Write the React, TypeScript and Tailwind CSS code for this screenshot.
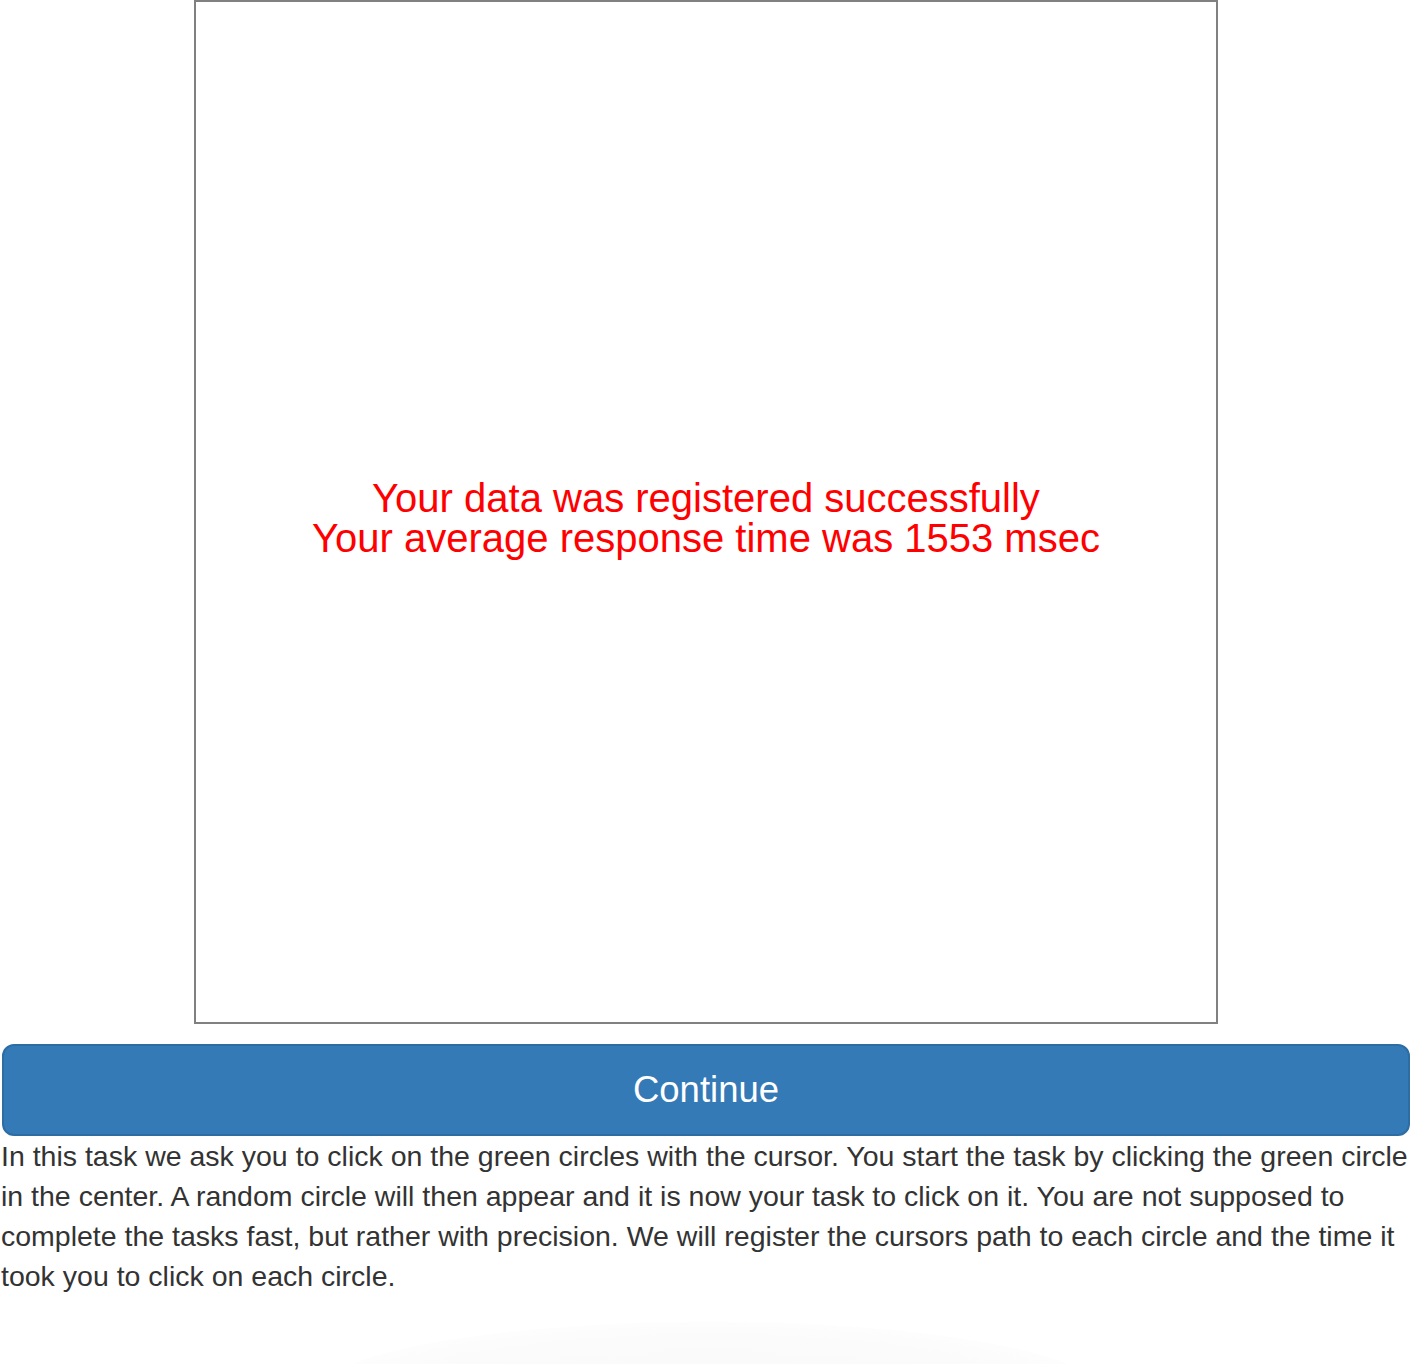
export default function App() {
  return (
    <div className="relative min-h-[1364px] bg-white font-['Liberation_Sans',Arial,sans-serif] overflow-hidden">
      <div className="mx-auto flex h-[1024px] w-[1024px] flex-col items-center justify-center border-2 border-[#808080] pt-[12px]">
        <p className="text-center text-[40px] leading-[40px] text-[#ff0000]">
          Your data was registered successfully
          <br />
          Your average response time was 1553 msec
        </p>
      </div>
      <div className="px-[2px] pt-[20px]">
        <button className="flex h-[92px] w-full items-center justify-center rounded-[12px] border-2 border-[#2e6da4] bg-[#337ab7] text-[36.5px] text-white">
          Continue
        </button>
      </div>
      <p className="pl-[1px] text-[28.5px] leading-[40px] text-[#333333]">
        In this task we ask you to click on the green circles with the cursor. You start the task by clicking the green circle in the center. A random circle will then appear and it is now your task to click on it. You are not supposed to complete the tasks fast, but rather with precision. We will register the cursors path to each circle and the time it took you to click on each circle.
      </p>
      <div className="absolute left-[320px] top-[1322px] h-[140px] w-[780px] rounded-[50%] bg-[radial-gradient(ellipse_at_center,#f9f9f9_0%,#fbfbfb_55%,#ffffff_85%)]" />
    </div>
  );
}
